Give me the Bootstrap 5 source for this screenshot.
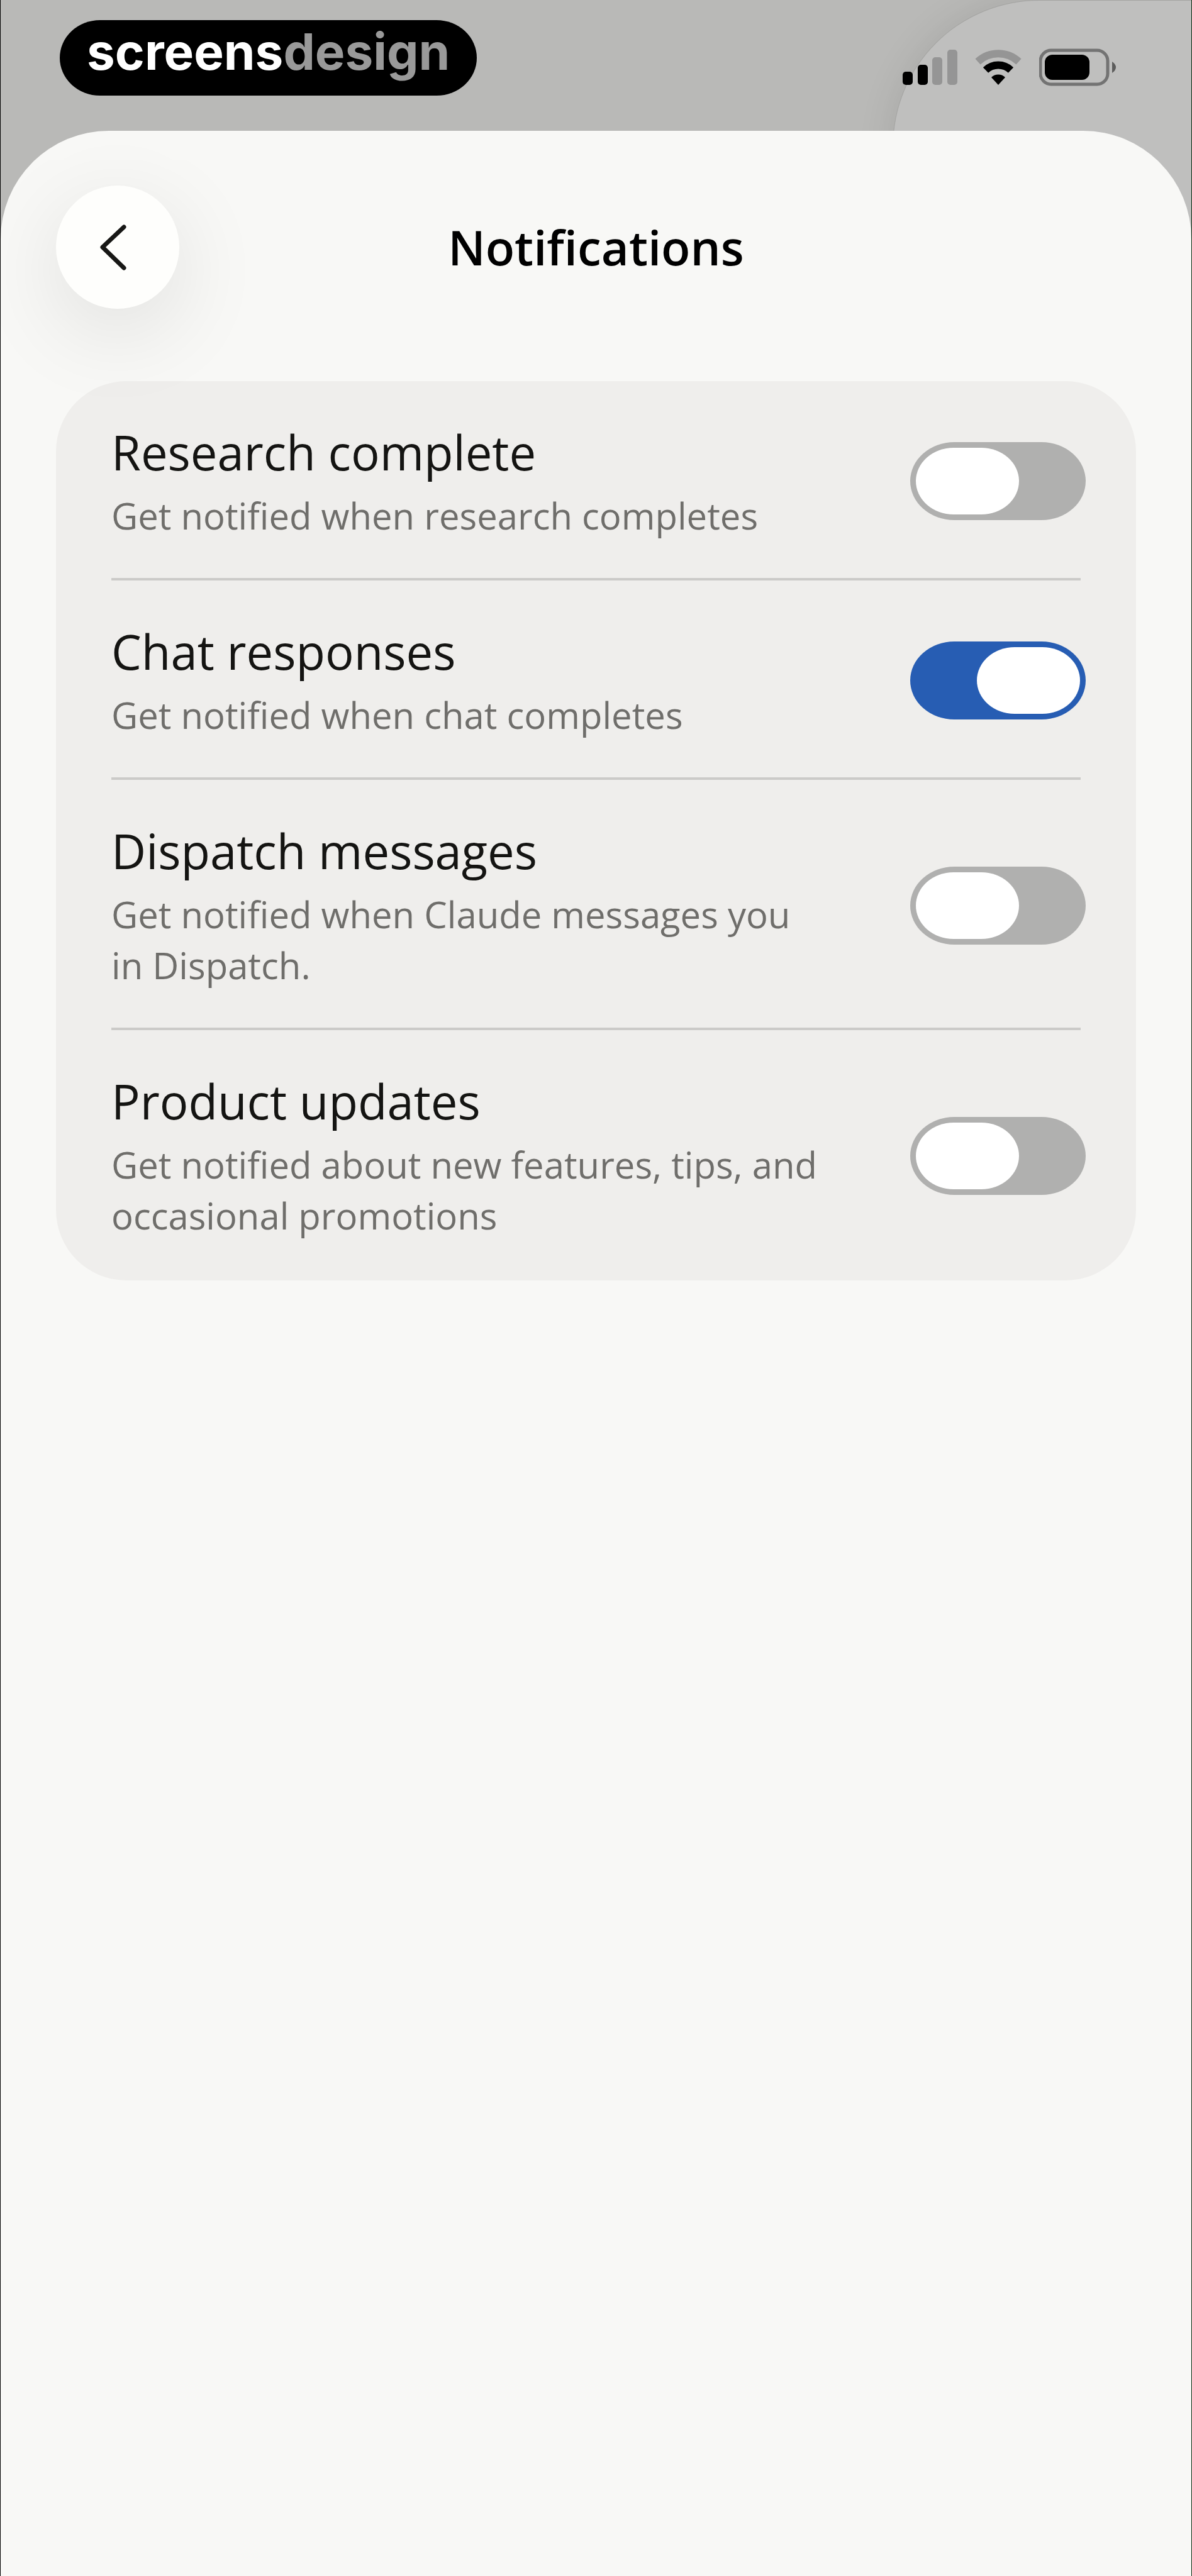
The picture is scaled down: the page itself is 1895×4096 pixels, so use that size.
<!DOCTYPE html>
<html lang="en">
<head>
<meta charset="utf-8">
<meta name="viewport" content="width=device-width, initial-scale=1">
<title>Notifications</title>
<link href="https://cdn.jsdelivr.net/npm/bootstrap@5.3.0/dist/css/bootstrap.min.css" rel="stylesheet">
<style>
  body {
    font-family: "Open Sans", "Noto Sans", sans-serif;
    color: #141412;
    background: #b9b9b7;
  }
  .phone-screen {
    border-left: 1px solid #000;
    border-right: 1px solid #0c2a10;
  }
  /* page edge showing behind the sheet */
  .behind-page {
    top: 1px;
    right: 0;
    width: 474px;
    height: 480px;
    background: #bfbfbe;
    border-top-left-radius: 232px;
    box-shadow: 0 0 0 1px #a4a4a2, 0 0 60px rgba(0, 0, 0, .1);
  }
  .status-bar { height: 208px; padding: 32px 120px 56px 94px; }
  .brand-pill {
    height: 120px;
    padding: 0 43px;
    border-radius: 64px / 60px;
    background: #000;
    color: #fff;
    font: 700 80px/100px Inter, "Liberation Sans", sans-serif;
  }
  .brand-pill .brand-tail { color: #999; }
  .status-icons { gap: 28px; padding-top: 30px; }
  .sheet {
    background: #f8f8f6;
    border-radius: 172px 172px 0 0;
    padding: 87px 88px 0;
  }
  .sheet-header { margin-bottom: 115px; }
  .header-side { width: 196px; }
  .back-btn {
    width: 196px;
    height: 196px;
    background: #fefefc;
    box-shadow: 0 36px 140px rgba(0, 0, 0, .1);
  }
  .back-btn:hover { background: #fff; }
  .sheet-title { font-size: 76px; line-height: 100px; font-weight: 600; color: #000; }
  .settings-card {
    background: #efeeec;
    border-radius: 112px;
    padding: 0 80px 4px 88px;
  }
  .setting-row { padding: 63px 0 58px; gap: 120px; }
  .setting-rule { height: 4px; margin-right: 8px; background: #cbcac8; }
  .setting-name { font-size: 76px; line-height: 100px; margin-bottom: 10px; display: block; }
  .setting-note { font-size: 58px; line-height: 81px; padding-bottom: 1px; color: #6f6e6b; }
  .form-check-input.toggle {
    appearance: none;
    width: 279px;
    height: 124px;
    margin: 0;
    padding: 9px;
    border: 0;
    border-radius: 70px / 62px;
    background: #b0b0af;
    display: flex;
  }
  .form-check-input.toggle::before {
    content: "";
    width: 164px;
    height: 106px;
    border-radius: 60px / 53px;
    background: #fff;
  }
  .form-check-input.toggle:checked { background: #275db3; justify-content: flex-end; }
</style>
</head>
<body>
<div class="phone-screen position-relative overflow-hidden d-flex flex-column min-vh-100">
  <div class="behind-page position-absolute" aria-hidden="true"></div>

  <header class="status-bar position-relative d-flex justify-content-between align-items-start">
    <div class="brand-pill"><span>screens</span><span class="brand-tail">design</span></div>
    <div class="status-icons d-flex align-items-center">
      <svg width="87" height="90" viewBox="0 -17 87 90" role="img" aria-label="Signal">
        <rect x="0" y="35" width="16" height="21" rx="5"/>
        <rect x="24" y="24" width="16" height="32" rx="5"/>
        <rect x="47" y="12" width="16" height="44" rx="5" fill="#959595"/>
        <rect x="71" y="0" width="16" height="56" rx="5" fill="#959595"/>
      </svg>
      <svg width="74" height="90" viewBox="0 -17 74 90" role="img" aria-label="Wi-Fi">
        <path d="M4.500 19 A48 48 0 0 1 69.500 19" fill="none" stroke="#959595" stroke-width="12"/>
        <path d="M17 32.500 A29 29 0 0 1 57 32.500" fill="none" stroke="#000" stroke-width="12"/>
        <path d="M37 56 L26 44 A16 16 0 0 1 48 44 Z"/>
      </svg>
      <svg width="122" height="90" viewBox="0 -16 122 90" role="img" aria-label="Battery">
        <rect x="2" y="2" width="107" height="54" rx="17" fill="none" stroke="#737373" stroke-width="5"/>
        <rect x="9" y="9" width="71" height="40" rx="12"/>
        <path d="M116 20 Q122 24 122 29 T116 38 Z" fill="#5c5c5c"/>
      </svg>
    </div>
  </header>

  <main class="sheet position-relative flex-grow-1">
    <div class="sheet-header d-flex align-items-center justify-content-between">
      <button type="button" class="back-btn btn border-0 rounded-circle p-0 d-flex" aria-label="Back">
        <svg width="196" height="196" viewBox="0 0 196 196" fill="none" stroke="#171715" stroke-width="7" stroke-linecap="round" stroke-linejoin="round"><path d="M108 66 L74 98 L108 131"/></svg>
      </button>
      <h1 class="sheet-title m-0">Notifications</h1>
      <div class="header-side"></div>
    </div>

    <section class="settings-card">
      <div class="setting-row d-flex align-items-center justify-content-between">
        <div>
          <label class="setting-name" for="research">Research complete</label>
          <div class="setting-note" id="research-note">Get notified when research completes</div>
        </div>
        <input class="form-check-input toggle flex-shrink-0" type="checkbox" role="switch" id="research" aria-describedby="research-note">
      </div>
      <div class="setting-rule"></div>
      <div class="setting-row d-flex align-items-center justify-content-between">
        <div>
          <label class="setting-name" for="chat">Chat responses</label>
          <div class="setting-note" id="chat-note">Get notified when chat completes</div>
        </div>
        <input class="form-check-input toggle flex-shrink-0" type="checkbox" role="switch" id="chat" aria-describedby="chat-note" checked>
      </div>
      <div class="setting-rule"></div>
      <div class="setting-row d-flex align-items-center justify-content-between">
        <div>
          <label class="setting-name" for="dispatch">Dispatch messages</label>
          <div class="setting-note" id="dispatch-note">Get notified when Claude messages you in&nbsp;Dispatch.</div>
        </div>
        <input class="form-check-input toggle flex-shrink-0" type="checkbox" role="switch" id="dispatch" aria-describedby="dispatch-note">
      </div>
      <div class="setting-rule"></div>
      <div class="setting-row d-flex align-items-center justify-content-between">
        <div>
          <label class="setting-name" for="product">Product updates</label>
          <div class="setting-note" id="product-note">Get notified about new features, tips, and occasional promotions</div>
        </div>
        <input class="form-check-input toggle flex-shrink-0" type="checkbox" role="switch" id="product" aria-describedby="product-note">
      </div>
    </section>
  </main>
</div>
<script src="https://cdn.jsdelivr.net/npm/bootstrap@5.3.0/dist/js/bootstrap.bundle.min.js"></script>
</body>
</html>
